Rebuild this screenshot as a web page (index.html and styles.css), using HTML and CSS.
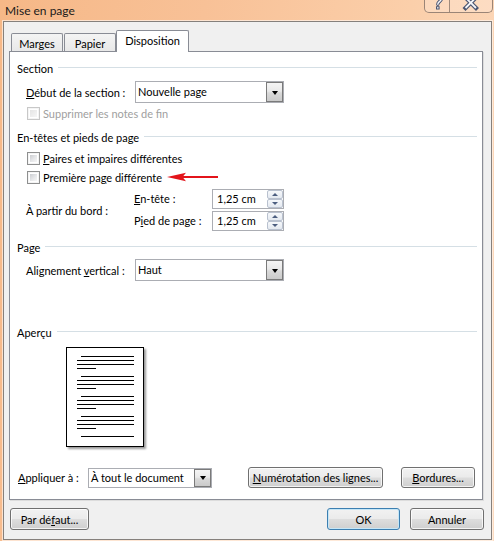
FILE: index.html
```html
<!DOCTYPE html>
<html lang="fr">
<head>
<meta charset="utf-8">
<title>Mise en page</title>
<link rel="stylesheet" href="styles.css">
</head>
<body>
<div class="window">
  <div class="titlebar">
    <span class="title">Mise en page</span>
    <div class="capbtns">
      <div class="capbtn help">
        <svg width="24" height="12" viewBox="0 0 24 12">
          <path d="M9.5,-2 C9.5,-6 16.5,-6 16.5,-1.5 C16.5,1.2 12.8,1.5 12.8,4.3" fill="none" stroke="#4b5672" stroke-width="3.4" stroke-linecap="round"/>
          <path d="M9.5,-2 C9.5,-6 16.5,-6 16.5,-1.5 C16.5,1.2 12.8,1.5 12.8,4.3" fill="none" stroke="#f4f6fa" stroke-width="1.4" stroke-linecap="round"/>
          <rect x="11" y="6.2" width="3.6" height="3.3" fill="#4b5672"/>
          <rect x="12" y="7.2" width="1.6" height="1.3" fill="#f4f6fa"/>
        </svg>
      </div>
      <div class="capbtn close">
        <svg width="42" height="12" viewBox="0 0 42 12">
          <path d="M15.5,-2.5 L26,8 M26,-2.5 L15.5,8" stroke="#4b5672" stroke-width="4.2" stroke-linecap="square"/>
          <path d="M15.5,-2.5 L26,8 M26,-2.5 L15.5,8" stroke="#f4f6fa" stroke-width="1.8" stroke-linecap="butt"/>
        </svg>
      </div>
    </div>
  </div>

  <div class="client">
    <div class="tabs">
      <div class="tab tab-marges">Marges</div>
      <div class="tab tab-papier">Papier</div>
      <div class="tab tab-active">Disposition</div>
    </div>

    <div class="panel">
      <div class="gh gh-section"><span>Section</span></div>

      <div class="row combo-row r-debut">
        <span class="lbl"><u>D</u>ébut de la section :</span>
        <div class="combo">
          <span class="ctext">Nouvelle page</span>
          <span class="dd"><i class="tri"></i></span>
        </div>
      </div>

      <div class="row cb-row r-suppr disabled">
        <span class="cb"></span>
        <span>Supprimer les notes de fin</span>
      </div>

      <div class="gh gh-entetes"><span>En-têtes et pieds de page</span></div>

      <div class="row cb-row r-paires">
        <span class="cb"></span>
        <span><u>P</u>aires et impaires différentes</span>
      </div>

      <div class="row cb-row r-premiere">
        <span class="cb"></span>
        <span>Première pa<u>g</u>e différente</span>
      </div>

      <div class="edge">
        <span class="edge-lbl">À partir du bord :</span>
        <span class="sub-lbl"><u>E</u>n-tête :</span>
        <div class="spin">
          <span class="sval">1,25 cm</span>
          <span class="sbtns"><span class="sb up"><i></i></span><span class="sb down"><i></i></span></span>
        </div>
        <span class="sub-lbl">P<u>i</u>ed de page :</span>
        <div class="spin">
          <span class="sval">1,25 cm</span>
          <span class="sbtns"><span class="sb up"><i></i></span><span class="sb down"><i></i></span></span>
        </div>
      </div>

      <div class="gh gh-page"><span>Page</span></div>

      <div class="row combo-row r-align">
        <span class="lbl">Alignement <u>v</u>ertical :</span>
        <div class="combo">
          <span class="ctext">Haut</span>
          <span class="dd"><i class="tri"></i></span>
        </div>
      </div>

      <div class="gh gh-apercu"><span>Aperçu</span></div>

      <div class="preview">
        <div class="grp"><div class="ln ind"></div><div class="ln"></div><div class="ln"></div><div class="ln short"></div></div>
        <div class="grp"><div class="ln ind"></div><div class="ln"></div><div class="ln"></div><div class="ln short"></div></div>
        <div class="grp"><div class="ln ind"></div><div class="ln"></div><div class="ln"></div><div class="ln short"></div></div>
        <div class="grp"><div class="ln ind"></div><div class="ln"></div><div class="ln"></div><div class="ln short"></div></div>
        <div class="grp"><div class="ln ind"></div></div>
      </div>

      <div class="row apply-row">
        <span class="apply-lbl"><u>A</u>ppliquer à :</span>
        <div class="combo combo-small">
          <span class="ctext">À tout le document</span>
          <span class="dd"><i class="tri"></i></span>
        </div>
        <div class="btn btn-num"><u>N</u>umérotation des lignes...</div>
        <div class="btn btn-bord"><u>B</u>ordures...</div>
      </div>
    </div>

    <div class="footer">
      <div class="btn btn-defaut">Par dé<u>f</u>aut...</div>
      <div class="btn btn-ok default">OK</div>
      <div class="btn btn-annuler">Annuler</div>
    </div>
  </div>

  <svg class="red-arrow" width="52" height="12" viewBox="0 0 52 12">
    <polygon points="0,6 19,1.8 15.5,6 19,10.2" fill="#e3141b"/>
    <rect x="14" y="5" width="37" height="2" fill="#e3141b"/>
  </svg>
</div>
</body>
</html>
```

FILE: styles.css
```css
* { box-sizing: border-box; }

html, body {
  margin: 0;
  padding: 0;
}

body {
  width: 494px;
  height: 541px;
  overflow: hidden;
  font-family: Lato, "Liberation Sans", sans-serif;
  font-size: 11px;
  color: #000;
  background: #fbd3b3;
}

u { text-decoration: underline; text-underline-offset: 1px; }

.window {
  position: relative;
  width: 494px;
  height: 541px;
  display: flex;
  flex-direction: column;
  padding: 0 2px 1px 3px;
  background: linear-gradient(100deg, #f6b887 0%, #f8c197 35%, #fbcfaa 70%, #fcdcc2 100%);
}

/* Title bar */
.titlebar {
  height: 21px;
  flex: none;
  display: flex;
  justify-content: space-between;
  align-items: flex-start;
}

.title {
  margin-left: 2px;
  line-height: 21px;
  font-size: 12px;
  color: #1a1a1a;
}

.capbtns {
  display: flex;
  width: 69px;
  height: 13px;
  margin-right: -1px;
  border: 1px solid #9b8576;
  border-top: none;
  border-radius: 0 0 5px 5px;
  background: rgba(255, 236, 220, 0.35);
  overflow: hidden;
}

.capbtn { height: 12px; }
.capbtn svg { display: block; }
.help { width: 25px; border-right: 1px solid #a08b7c; }
.close { flex: 1; }

/* Client area */
.client {
  flex: 1;
  display: flex;
  flex-direction: column;
  padding: 8px 7px 0 5px;
  background: #f0f0f0;
  border: 1px solid #85807c;
  box-shadow: 0 0 0 1px rgba(255, 244, 235, 0.7);
}

/* Tabs */
.tabs {
  height: 21px;
  flex: none;
  display: flex;
  align-items: flex-end;
  padding-left: 2px;
}

.tab {
  height: 18px;
  border: 1px solid #898c95;
  border-bottom: none;
  background: linear-gradient(#f4f4f4, #e8e8e8);
  display: flex;
  align-items: center;
  justify-content: center;
  padding-top: 1px;
}

.tab-marges { width: 52px; margin-right: 1px; border-radius: 2px 2px 0 0; }
.tab-papier { width: 52px; border-radius: 2px 2px 0 0; }

.tab-active {
  position: relative;
  z-index: 2;
  width: 73px;
  height: 22px;
  margin-bottom: -1px;
  background: #fff;
  border-radius: 2px 2px 0 0;
  padding-top: 0;
  padding-bottom: 2px;
}

/* Panel */
.panel {
  width: 474px;
  height: 449px;
  flex: none;
  display: flex;
  flex-direction: column;
  padding: 0 5px 0 7px;
  background: #fff;
  border: 1px solid #898c95;
  box-shadow: 1px 1px 0 #dcdcdc;
}

/* Group headings */
.gh {
  height: 14px;
  display: flex;
  align-items: center;
  gap: 5px;
  flex: none;
}
.gh::after {
  content: "";
  flex: 1;
  height: 1px;
  background: #d5dfe5;
  margin-top: -1px;
}

.gh-section { margin-top: 9px; }
.gh-entetes { margin-top: 10px; }
.gh-page { margin-top: 9px; }
.gh-apercu { margin-top: 44px; }

/* Rows */
.row {
  display: flex;
  align-items: center;
  flex: none;
}

.combo-row { height: 22px; padding-left: 9px; }
.r-debut { margin-top: 6px; }
.r-align { margin-top: 5px; }

.lbl { width: 109px; }

.combo {
  width: 149px;
  height: 22px;
  display: flex;
  background: #fff;
  border: 1px solid #abadb3;
}
.ctext {
  flex: 1;
  padding-left: 2px;
  line-height: 20px;
  white-space: nowrap;
}
.dd {
  width: 17px;
  display: flex;
  align-items: center;
  justify-content: center;
  border: 1px solid #7a7a7a;
  background: linear-gradient(#f4f4f4 0%, #e9e9e9 45%, #d9d9d9 55%, #cacaca 100%);
}
.tri {
  width: 0;
  height: 0;
  border-left: 3.5px solid transparent;
  border-right: 3.5px solid transparent;
  border-top: 4px solid #000;
  margin-top: 1px;
}

/* Checkboxes */
.cb-row { height: 13px; padding-left: 10px; gap: 3px; }
.r-suppr { margin-top: 4px; }
.r-paires { margin-top: 8px; }
.r-premiere { margin-top: 6px; }

.cb {
  width: 13px;
  height: 13px;
  flex: none;
  border: 1px solid #8e8f8f;
  padding: 2px;
  background: linear-gradient(135deg, #cbcdd1 0%, #e6e7e9 55%, #f6f6f6 100%) content-box, #fff;
  box-shadow: inset 0 0 0 1px #f4f4f4;
}
.disabled { color: #a0a0a0; }
.disabled .cb {
  border-color: #c8c8c8;
  background: linear-gradient(135deg, #e4e4e4, #f6f6f6) content-box, #fff;
}

/* Edge distances */
.edge {
  margin-top: 5px;
  flex: none;
  display: grid;
  grid-template-columns: 108px 78px 72px;
  grid-template-rows: 20px 20px;
  row-gap: 2px;
  padding-left: 9px;
  align-items: center;
}
.edge-lbl { grid-row: 1 / span 2; grid-column: 1; }
.sub-lbl { margin-top: -1px; }

.spin {
  width: 72px;
  height: 20px;
  display: flex;
  background: #fff;
  border: 1px solid #abadb3;
}
.sval {
  flex: 1;
  padding-left: 4px;
  line-height: 18px;
}
.sbtns {
  width: 16px;
  display: flex;
  flex-direction: column;
  gap: 0;
}
.sb {
  flex: 1;
  display: flex;
  align-items: center;
  justify-content: center;
  border: 1px solid #b9c1cf;
  border-radius: 2px;
  background: linear-gradient(#f6f8fb, #e4e9f0);
}
.sb i {
  width: 0;
  height: 0;
  border-left: 3px solid transparent;
  border-right: 3px solid transparent;
}
.sb.up i { border-bottom: 3px solid #4c5e80; }
.sb.down i { border-top: 3px solid #4c5e80; }

/* Preview */
.preview {
  flex: none;
  width: 78px;
  height: 100px;
  margin: 8px 0 0 49px;
  padding: 8px 0 0 10px;
  border: 1px solid #000;
  background: #fff;
  box-shadow: 2px 2px 2px rgba(0, 0, 0, 0.4);
}
.grp + .grp { margin-top: 7px; }
.ln {
  width: 57px;
  height: 1px;
  background: #000;
}
.ln + .ln { margin-top: 3px; }
.ln.ind { margin-left: 4px; width: 53px; }
.ln.short { width: 19px; }

/* Apply row */
.apply-row {
  height: 21px;
  margin-top: 20px;
  padding-left: 1px;
}
.apply-lbl { width: 70px; }
.combo-small { width: 124px; height: 20px; }
.combo-small .ctext { line-height: 18px; }

/* Buttons */
.btn {
  height: 21px;
  display: flex;
  align-items: center;
  justify-content: center;
  border: 1px solid #707070;
  border-radius: 3px;
  background: linear-gradient(#f2f2f2 0%, #ebebeb 48%, #dddddd 52%, #cfcfcf 100%);
  box-shadow: inset 0 0 0 1px rgba(255, 255, 255, 0.75);
  white-space: nowrap;
}
.btn-num { width: 135px; margin-left: auto; }
.btn-bord { width: 74px; margin-left: 18px; margin-right: 2px; }

.footer {
  flex: none;
  height: 22px;
  margin-top: 8px;
  display: flex;
  padding-left: 1px;
}
.footer .btn { height: 22px; }
.btn-defaut { width: 79px; }
.btn-ok { width: 73px; margin-left: auto; }
.btn-annuler { width: 74px; margin-left: 10px; }

.btn.default {
  border-color: #3c7fb1;
  box-shadow: inset 0 0 0 1px #c5e6f7;
}

/* Annotation arrow */
.red-arrow {
  position: absolute;
  left: 167px;
  top: 171px;
}
```
